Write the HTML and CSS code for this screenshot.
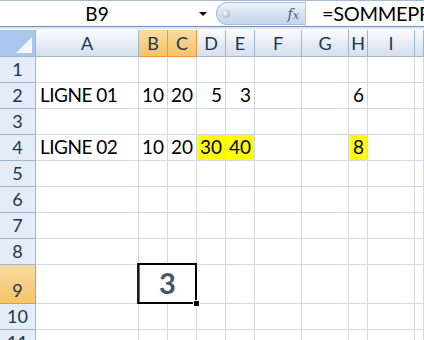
FILE: index.html
```html
<!DOCTYPE html>
<html lang="fr">
<head>
    <meta charset="UTF-8">
    <title>Classeur</title>
    <link rel="stylesheet" href="styles.css">
</head>
<body>
    <div class="bar">
        <div class="namebox">
            <span class="name">B9</span>
            <span class="arrow"></span>
        </div>
        <div class="pill">
            <span class="dot"></span>
            <span class="fx">f<i>x</i></span>
        </div>
        <div class="formula">=SOMMEPROD((B2:I2&gt;0)*(B4:I4&lt;&gt;&quot;&quot;))</div>
    </div>

    <div class="sheet">
        <div class="row head">
            <div class="corner"><span class="tri"></span></div>
            <div class="ch">A</div>
            <div class="ch on">B</div>
            <div class="ch on">C</div>
            <div class="ch">D</div>
            <div class="ch">E</div>
            <div class="ch">F</div>
            <div class="ch">G</div>
            <div class="ch">H</div>
            <div class="ch">I</div>
            <div class="ch"></div>
        </div>

        <div class="row">
            <div class="rh">1</div>
            <div class="c"></div><div class="c"></div><div class="c"></div><div class="c"></div><div class="c"></div>
            <div class="c"></div><div class="c"></div><div class="c"></div><div class="c"></div><div class="c"></div>
        </div>
        <div class="row">
            <div class="rh">2</div>
            <div class="c txt">LIGNE 01</div>
            <div class="c n">10</div>
            <div class="c n">20</div>
            <div class="c n">5</div>
            <div class="c n">3</div>
            <div class="c"></div><div class="c"></div>
            <div class="c n">6</div>
            <div class="c"></div><div class="c"></div>
        </div>
        <div class="row">
            <div class="rh">3</div>
            <div class="c"></div><div class="c"></div><div class="c"></div><div class="c"></div><div class="c"></div>
            <div class="c"></div><div class="c"></div><div class="c"></div><div class="c"></div><div class="c"></div>
        </div>
        <div class="row">
            <div class="rh">4</div>
            <div class="c txt">LIGNE 02</div>
            <div class="c n">10</div>
            <div class="c n">20</div>
            <div class="c n yel">30</div>
            <div class="c n yel">40</div>
            <div class="c"></div><div class="c"></div>
            <div class="c n yel">8</div>
            <div class="c"></div><div class="c"></div>
        </div>
        <div class="row">
            <div class="rh">5</div>
            <div class="c"></div><div class="c"></div><div class="c"></div><div class="c"></div><div class="c"></div>
            <div class="c"></div><div class="c"></div><div class="c"></div><div class="c"></div><div class="c"></div>
        </div>
        <div class="row">
            <div class="rh">6</div>
            <div class="c"></div><div class="c"></div><div class="c"></div><div class="c"></div><div class="c"></div>
            <div class="c"></div><div class="c"></div><div class="c"></div><div class="c"></div><div class="c"></div>
        </div>
        <div class="row">
            <div class="rh">7</div>
            <div class="c"></div><div class="c"></div><div class="c"></div><div class="c"></div><div class="c"></div>
            <div class="c"></div><div class="c"></div><div class="c"></div><div class="c"></div><div class="c"></div>
        </div>
        <div class="row">
            <div class="rh">8</div>
            <div class="c"></div><div class="c"></div><div class="c"></div><div class="c"></div><div class="c"></div>
            <div class="c"></div><div class="c"></div><div class="c"></div><div class="c"></div><div class="c"></div>
        </div>
        <div class="row tall">
            <div class="rh on">9</div>
            <div class="c"></div>
            <div class="c merged">3</div>
            <div class="c"></div><div class="c"></div>
            <div class="c"></div><div class="c"></div><div class="c"></div><div class="c"></div><div class="c"></div>
        </div>
        <div class="row">
            <div class="rh">10</div>
            <div class="c"></div><div class="c"></div><div class="c"></div><div class="c"></div><div class="c"></div>
            <div class="c"></div><div class="c"></div><div class="c"></div><div class="c"></div><div class="c"></div>
        </div>
        <div class="row">
            <div class="rh">11</div>
            <div class="c"></div><div class="c"></div><div class="c"></div><div class="c"></div><div class="c"></div>
            <div class="c"></div><div class="c"></div><div class="c"></div><div class="c"></div><div class="c"></div>
        </div>
    </div>
</body>
</html>
```

FILE: styles.css
```css
body {
    margin: 0;
    background: #fff;
    font-family: Lato, "Liberation Sans", sans-serif;
    font-size: 19px;
    color: #000;
    overflow: hidden;
    width: 424px;
    height: 340px;
}

/* barre du haut : zone nom + barre de formule */
.bar {
    display: flex;
    border-top: 1px solid #a7bad3;
    border-bottom: 1px solid #6f93c6;
    box-sizing: border-box;
    height: 27px;
    margin-bottom: 3px;
    box-shadow: 0 2px 0 #dde7f3;
}
.namebox {
    width: 216px;
    position: relative;
    display: flex;
    align-items: center;
    justify-content: center;
    background: #fff;
}
.name {
    margin-left: -22px;
    line-height: 1;
}
.arrow {
    position: absolute;
    right: 9px;
    top: 11px;
    border-left: 4px solid transparent;
    border-right: 4px solid transparent;
    border-top: 4px solid #000;
}
.pill {
    width: 89px;
    margin-top: 1px;
    height: 23px;
    border-radius: 12px 0 0 12px;
    background: linear-gradient(#eef3fa, #d3e0f1 55%, #c5d6ee);
    border: 1px solid #aac0dd;
    border-right: none;
    box-sizing: border-box;
    display: flex;
    align-items: center;
    justify-content: space-between;
    padding: 0 6px 0 5px;
}
.dot {
    width: 8px;
    height: 8px;
    border-radius: 50%;
    background: radial-gradient(circle at 40% 40%, #fff, #b9c1cc 60%, #9aa4b1);
}
.fx {
    font-family: "DejaVu Serif", serif;
    font-style: italic;
    font-size: 14px;
    color: #4f5a6b;
}
.fx i {
    font-size: 11px;
}
.formula {
    flex: 1;
    white-space: nowrap;
    overflow: hidden;
    background: #fff;
    border-left: 1px solid #b8c9e0;
    padding-left: 16px;
    font-size: 20px;
    letter-spacing: -0.3px;
    line-height: 24px;
}

/* feuille */
.row {
    display: grid;
    grid-template-columns: 36px 103px 29px 29px 29px 29px 47px 47px 19px 47px 1fr;
    height: 26px;
}
.row.head {
    height: 27px;
}
.row.tall {
    height: 39px;
}
.row > div {
    box-sizing: border-box;
    border-right: 1px solid #d0d7e5;
    border-bottom: 1px solid #d0d7e5;
}

.corner {
    background: #aac6ec;
    border-color: #9eb6ce !important;
    position: relative;
}
.tri {
    position: absolute;
    right: 3px;
    bottom: 3px;
    border-left: 16px solid transparent;
    border-bottom: 16px solid #f4f8fd;
}
.ch {
    background: linear-gradient(#fbfcfe, #e3e9f3 60%, #d7e0ed);
    border-color: #9eb6ce !important;
    color: #20364f;
    font-size: 18px;
    display: flex;
    align-items: center;
    justify-content: center;
}
.ch.on, .rh.on {
    background: linear-gradient(#f9dca3, #f6cf84 50%, #f3c46a);
    border-color: #f29536 !important;
}
.rh {
    background: #e4ecf7;
    border-color: #9eb6ce !important;
    color: #20364f;
    font-size: 18px;
    display: flex;
    align-items: flex-end;
    justify-content: center;
    padding-bottom: 2px;
}

.c {
    display: flex;
    align-items: flex-end;
    padding: 0 4px 2px;
    white-space: nowrap;
}
.c.txt {
    letter-spacing: -0.5px;
}
.c.n {
    justify-content: flex-end;
    padding-right: 3px;
}
.c.yel {
    background: #ffff00;
}
.c.merged {
    grid-column: span 2;
    justify-content: center;
    position: relative;
    font-weight: bold;
    font-size: 29px;
    color: #44546a;
    padding-bottom: 3px;
}
.c.merged::before {
    content: "";
    position: absolute;
    left: -2px;
    top: -2px;
    right: -1px;
    bottom: -1px;
    border: 2px solid #000;
    border-left-color: #1c1c1c;
    box-shadow: inset 1px 0 0 #2a6ccf;
}
.c.merged::after {
    content: "";
    position: absolute;
    right: -4px;
    bottom: -4px;
    width: 5px;
    height: 5px;
    background: #000;
    border: 1px solid #fff;
}
```
